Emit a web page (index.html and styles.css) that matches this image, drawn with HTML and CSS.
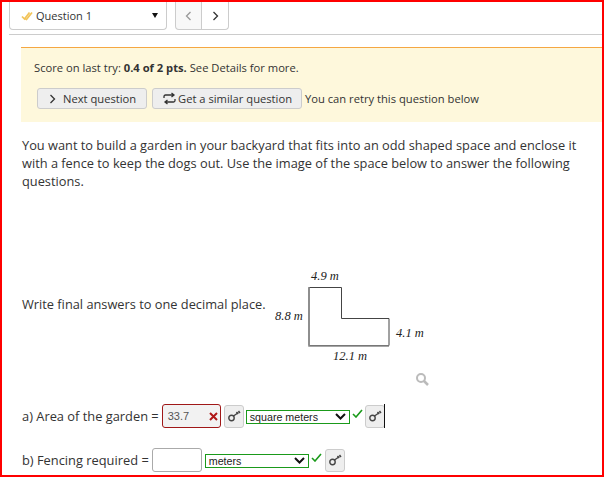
FILE: index.html
```html
<!DOCTYPE html>
<html lang="en">
<head>
  <meta charset="UTF-8" />
  <title>Question 1</title>
  <link rel="stylesheet" href="styles.css">
</head>
<body>
  <div class="frame">
    <div class="toolbar">
      <div class="question-select">
        <svg class="check-icon" width="12" height="10" viewBox="0 0 12 10"><path d="M1 5.500l2.500 2.500 5-6.500M4.500 8l1 .5 5.500-7" fill="none" stroke="#f2c45a" stroke-width="1.700"/></svg>
        <span class="question-name">Question 1</span>
        <span class="caret"></span>
      </div>
      <div class="nav">
        <div class="nav-btn prev"><svg width="7" height="10" viewBox="0 0 7 10"><path d="M5.500 1L1.500 5l4 4" fill="none" stroke="#999" stroke-width="1.300"/></svg></div>
        <div class="nav-btn next"><svg width="7" height="10" viewBox="0 0 7 10"><path d="M1.500 1l4 4-4 4" fill="none" stroke="#333" stroke-width="1.300"/></svg></div>
      </div>
    </div>

    <div class="score-box">
      <p class="score">Score on last try: <b>0.4 of 2 pts.</b> See Details for more.</p>
      <div class="score-actions">
        <div class="btn next-question">
          <svg width="7" height="10" viewBox="0 0 7 10"><path d="M1.500 1l4 4-4 4" fill="none" stroke="#333" stroke-width="1.300"/></svg>
          Next question
        </div>
        <div class="btn similar">
          <svg width="13" height="13" viewBox="0 0 13 13"><path d="M1 6V4.500Q1 3 2.500 3H11M8.500 1L11 3 8.500 5M12 7v1.500Q12 10 10.500 10H2M4.500 8L2 10l2.500 2" fill="none" stroke="#333" stroke-width="1.300"/></svg>
          Get a similar question
        </div>
        <span class="retry">You can retry this question below</span>
      </div>
    </div>

    <p class="question-text">You want to build a garden in your backyard that fits into an odd shaped space and enclose it with a fence to keep the dogs out. Use the image of the space below to answer the following questions.</p>

    <div class="figure-row">
      <span class="instructions">Write final answers to one decimal place.</span>
      <svg class="figure" width="190" height="130" viewBox="0 0 190 130">
        <path d="M49 27.500H81.500V58.500H129V85.500H49Z" fill="#fff" stroke="#444" stroke-width="1"/>
        <path d="M49 27V86H129" fill="none" stroke="#888" stroke-width="1.500"/>
        <text x="51" y="20">4.9 m</text>
        <text x="15" y="60">8.8 m</text>
        <text x="136" y="77">4.1 m</text>
        <text x="73" y="100">12.1 m</text>
        <circle cx="161" cy="118" r="4" fill="none" stroke="#bbb" stroke-width="2"/>
        <path d="M164 121l4 4" stroke="#bbb" stroke-width="2.500"/>
      </svg>
    </div>

    <div class="answer-row part-a">
      <span class="answer-label">a) Area of the garden =</span>
      <div class="answer-input wrong">33.7<svg class="cross" width="9" height="9" viewBox="0 0 9 9"><path d="M1 1l7 7M8 1L1 8" fill="none" stroke="#b01818" stroke-width="2"/></svg></div>
      <div class="key-btn"><svg width="14" height="12" viewBox="0 0 14 12"><use href="#key"/></svg></div>
      <div class="unit-select wide">square meters<svg class="chevron" width="11" height="7" viewBox="0 0 11 7"><path d="M1 1l4.500 4.500L10 1" fill="none" stroke="#111" stroke-width="2"/></svg></div>
      <svg class="tick" width="11" height="9" viewBox="0 0 11 9"><path d="M1 5l3 3 6-7" fill="none" stroke="#1a9a1a" stroke-width="1.600"/></svg>
      <div class="key-btn last"><svg width="14" height="12" viewBox="0 0 14 12"><use href="#key"/></svg></div>
      <span class="cursor"></span>
    </div>

    <div class="answer-row part-b">
      <span class="answer-label">b) Fencing required =</span>
      <div class="answer-input empty"></div>
      <div class="unit-select narrow">meters<svg class="chevron" width="11" height="7" viewBox="0 0 11 7"><path d="M1 1l4.500 4.500L10 1" fill="none" stroke="#111" stroke-width="2"/></svg></div>
      <svg class="tick" width="11" height="9" viewBox="0 0 11 9"><path d="M1 5l3 3 6-7" fill="none" stroke="#1a9a1a" stroke-width="1.600"/></svg>
      <div class="key-btn"><svg width="14" height="12" viewBox="0 0 14 12"><use href="#key"/></svg></div>
    </div>
  </div>

  <svg class="defs" width="0" height="0">
    <defs>
      <g id="key" fill="none" stroke="#444" stroke-width="1.400">
        <circle cx="4.500" cy="8" r="2.700"/>
        <path d="M6.500 6L11.500 2.500"/>
        <path d="M9.500 2l1.500 2M11.500 1l1.500 2"/>
      </g>
    </defs>
  </svg>
</body>
</html>
```

FILE: styles.css
```css
* {
  margin: 0;
  padding: 0;
  box-sizing: border-box;
  font-family: 'Open Sans', sans-serif;
}

html, body {
  height: 477px;
  overflow: hidden;
  background: #fff;
  color: #333;
}

.frame {
  width: 604px;
  height: 477px;
  border: 2px solid #f00;
  overflow: hidden;
}

.toolbar {
  display: flex;
  margin-left: 7px;
  height: 33px;
  gap: 8px;
  border-bottom: 1px solid #ccc;
  align-items: flex-start;
}

.question-select {
  width: 158px;
  height: 28px;
  border: 1px solid #ccc;
  border-top: 0;
  border-radius: 0 0 4px 4px;
  display: flex;
  align-items: center;
  padding-left: 11px;
  font-size: 11px;
}

.question-name {
  margin-left: 3px;
  flex: 1;
}

.caret {
  width: 0;
  height: 0;
  margin-right: 8px;
  border-left: 3.500px solid transparent;
  border-right: 3.500px solid transparent;
  border-top: 5px solid #111;
}

.nav {
  display: flex;
}

.nav-btn {
  width: 27px;
  height: 28px;
  border: 1px solid #ccc;
  border-top: 0;
  display: flex;
  align-items: center;
  justify-content: center;
}

.prev {
  background: #f8f8f8;
  border-radius: 0 0 0 4px;
}

.next {
  border-left: 0;
  border-radius: 0 0 4px 0;
}

.score-box {
  margin: 12px 0 0 19px;
  height: 75px;
  background: #fef8dc;
  border-top: 1px solid #f5a742;
  padding: 12px 0 0 13px;
  font-size: 11.200px;
}

.score {
  line-height: 16px;
}

.score-actions {
  display: flex;
  align-items: center;
  margin: 12px 0 0 3px;
  height: 21px;
}

.btn {
  height: 21px;
  display: flex;
  align-items: center;
  background: #eee;
  border: 1px solid #ccc;
  border-radius: 3px;
}

.next-question {
  width: 110px;
  padding-left: 11px;
  gap: 7px;
}

.similar {
  width: 150px;
  margin-left: 5px;
  padding-left: 10px;
  gap: 2px;
}

.retry {
  margin-left: 3px;
}

.question-text {
  margin: 14px 20px 0 20px;
  font-size: 12.800px;
  line-height: 18px;
}

.figure-row {
  display: flex;
  align-items: flex-start;
  margin: 70px 0 0 20px;
  height: 130px;
}

.instructions {
  font-size: 12.800px;
  line-height: 18px;
  margin-top: 35px;
  width: 238px;
  white-space: nowrap;
}

.figure text {
  font-family: 'Liberation Serif', serif;
  font-style: italic;
  font-size: 12.500px;
  fill: #222;
}

.answer-row {
  display: flex;
  align-items: center;
  margin-left: 20px;
  font-size: 12.850px;
}

.part-a {
  height: 24px;
  margin-top: 14px;
}

.part-b {
  height: 24px;
  margin-top: 20px;
}

.answer-label {
  margin-right: 3px;
}

.answer-input {
  height: 24px;
  border: 1px solid #aaa;
  border-radius: 3px;
  font-family: 'Liberation Sans', sans-serif;
  font-size: 11px;
  display: flex;
  align-items: center;
  padding-left: 5px;
}

.wrong {
  width: 59px;
  border-color: #a01818;
  background: #f2f2f2;
  color: #555;
  justify-content: space-between;
  padding-right: 2px;
}

.empty {
  width: 50px;
}

.key-btn {
  width: 20px;
  height: 23px;
  margin-left: 3px;
  background: #eee;
  border: 1px solid #ccc;
  border-radius: 3px;
  display: flex;
  align-items: center;
  justify-content: center;
}

.key-btn.last {
  margin-left: 2px;
}

.unit-select {
  height: 14px;
  margin-top: 1px;
  border: 1px solid #1a9a1a;
  font-family: 'Liberation Sans', sans-serif;
  font-size: 10.700px;
  color: #222;
  display: flex;
  align-items: center;
  justify-content: space-between;
  padding: 0 3px 0 3px;
}

.wide {
  width: 104px;
  margin-left: 2px;
}

.narrow {
  width: 104px;
  margin-left: 3px;
}

.tick {
  margin: -6px 0 0 2px;
}

.cursor {
  width: 1px;
  height: 24px;
  margin-left: -1px;
  background: #111;
}

.defs {
  position: absolute;
}
```
